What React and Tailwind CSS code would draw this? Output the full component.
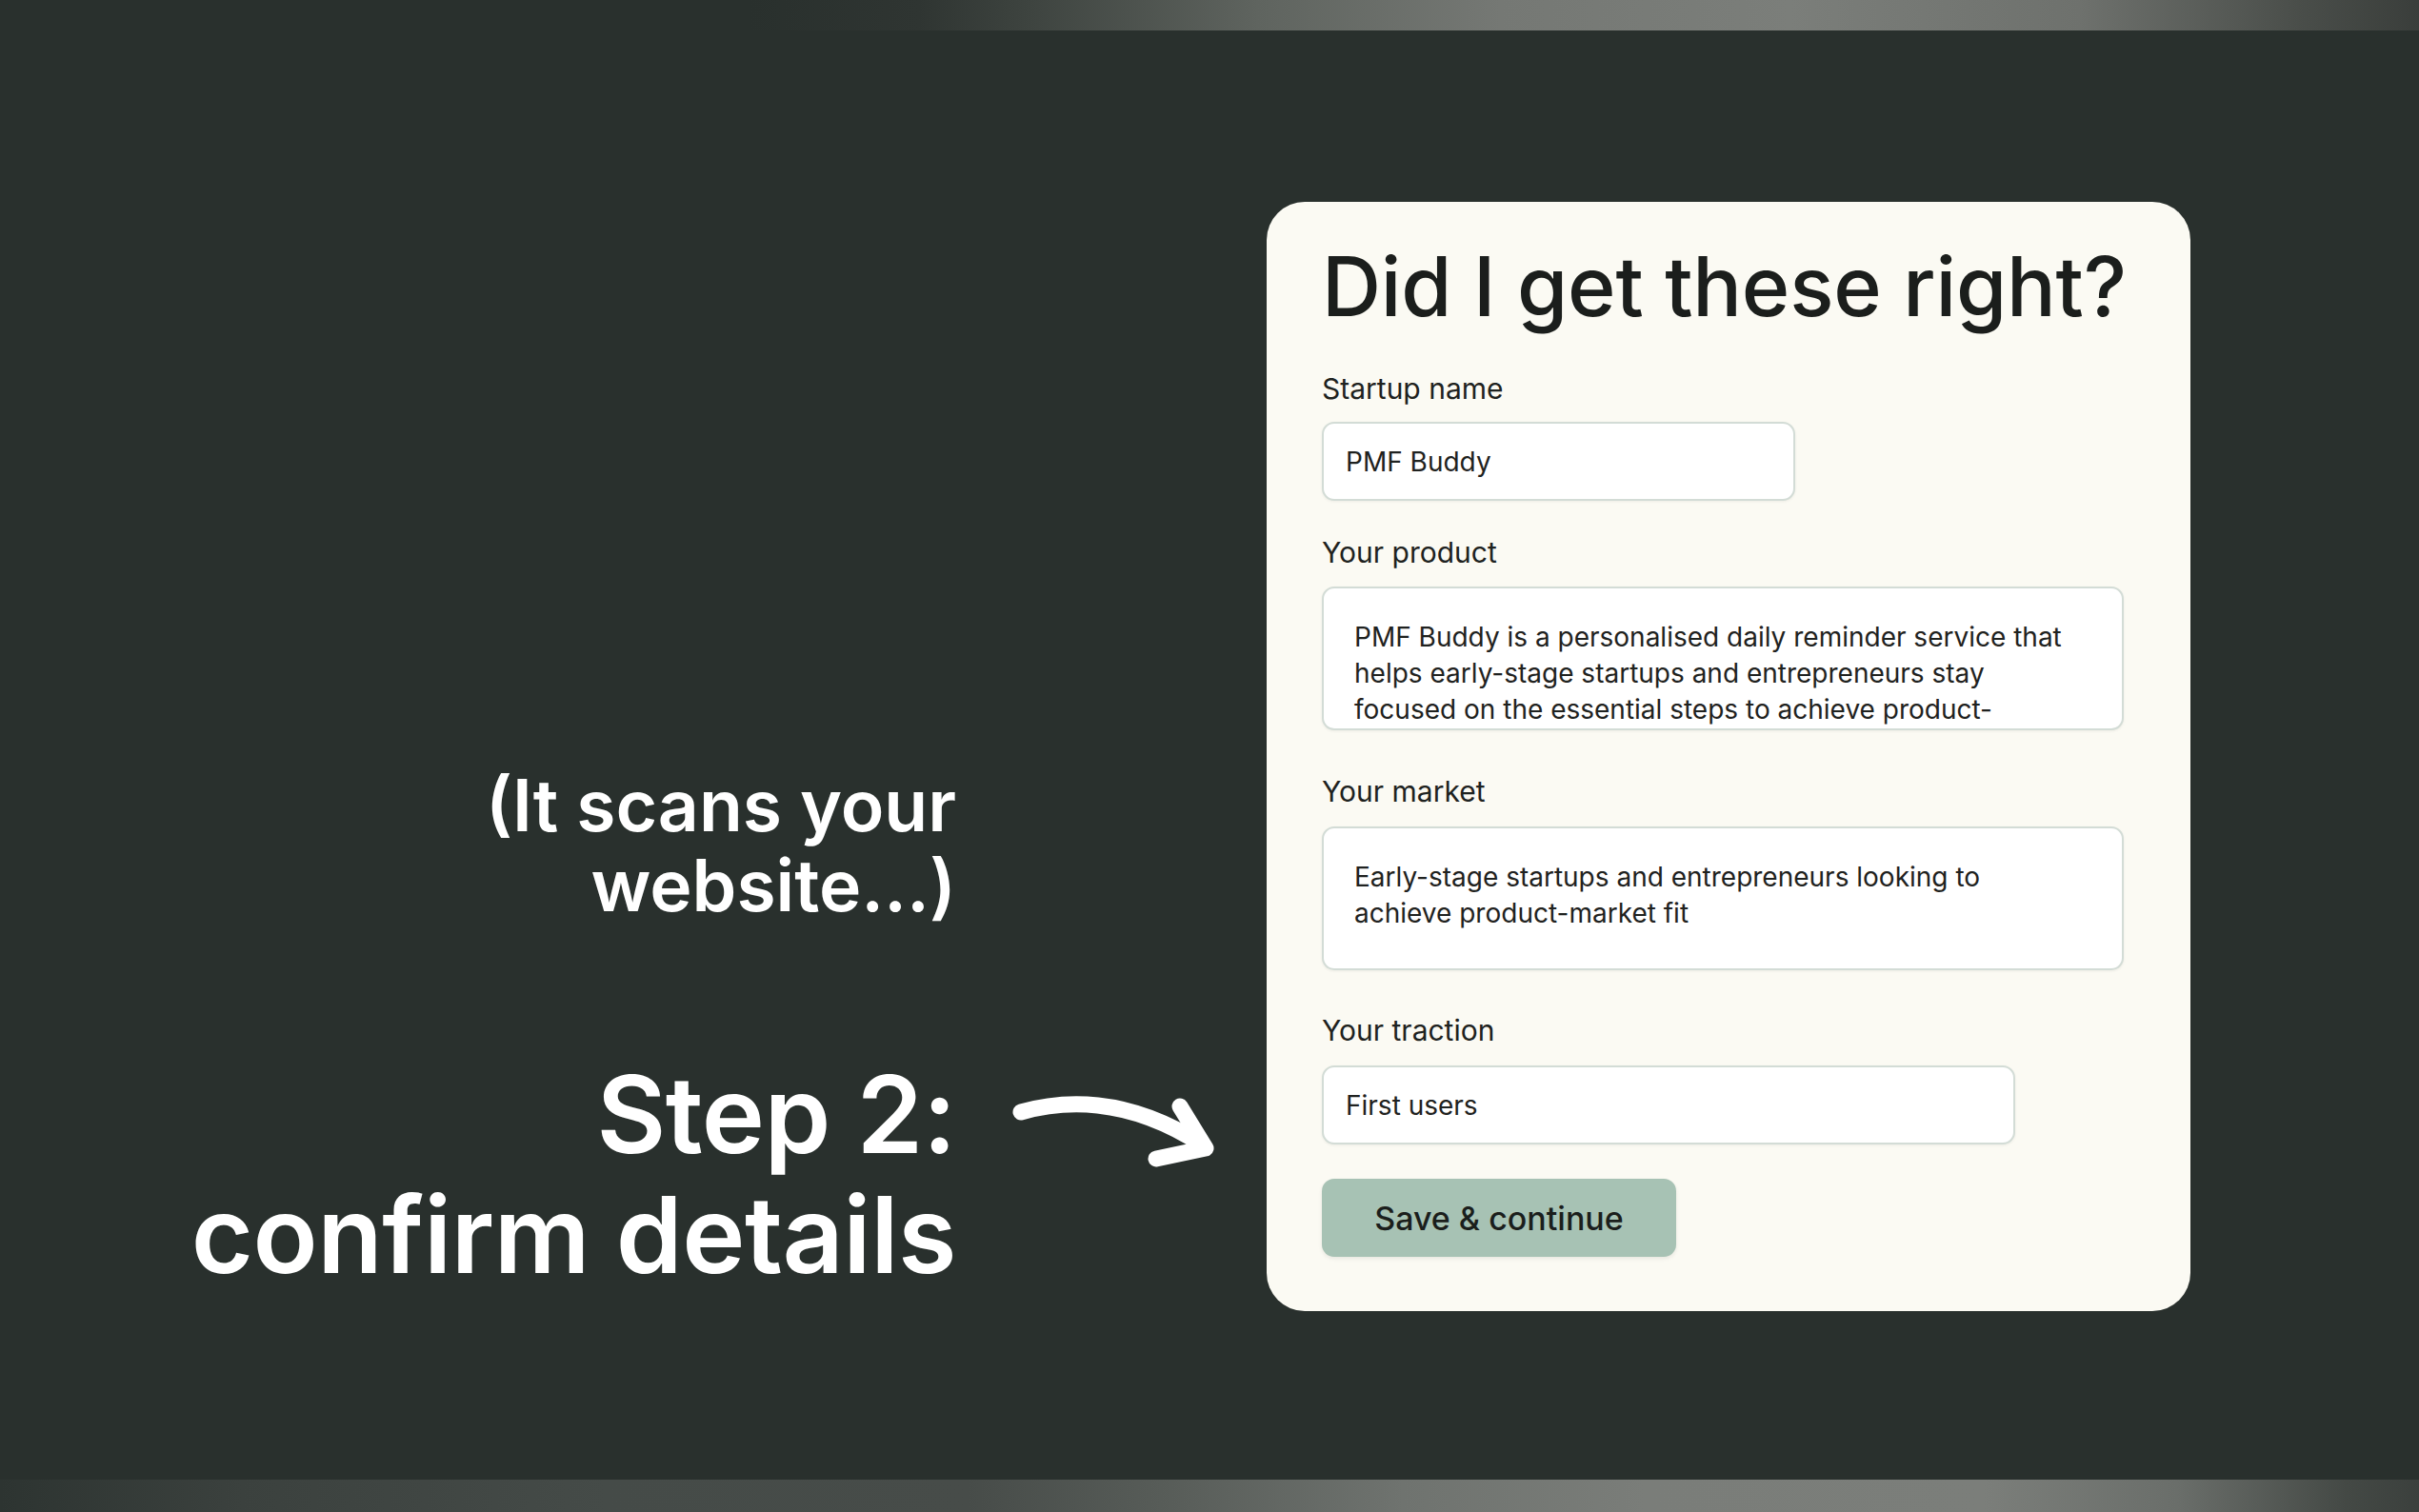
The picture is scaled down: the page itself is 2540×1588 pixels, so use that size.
import React from 'react';

const font = { fontFamily: '"Inter", "Noto Sans", sans-serif' };

function Label({ children, className = '' }) {
  return (
    <div className={`text-[30px] leading-[36px] font-normal text-[#1e2220] ${className}`}>{children}</div>
  );
}

function Field({ value, className = '' }) {
  return (
    <div className={`flex items-center h-[83px] rounded-[13px] border-2 border-[#d3dcd6] bg-white pl-[23px] text-[28px] text-[#1f2220] shadow-[0_1px_3px_rgba(0,0,0,0.06)] ${className}`}>
      {value}
    </div>
  );
}

function Area({ lines }) {
  return (
    <div className="h-[151px] w-[842px] overflow-hidden rounded-[13px] border-2 border-[#d3dcd6] bg-white pl-[32px] pt-[32px] text-[28px] leading-[38px] text-[#1f2220] shadow-[0_1px_3px_rgba(0,0,0,0.06)]">
      {lines.map((l, i) => (
        <div key={i} className="whitespace-nowrap">{l}</div>
      ))}
    </div>
  );
}

function Arrow() {
  return (
    <svg width="240" height="120" viewBox="0 0 240 120" fill="none" className="mt-[1088px] ml-[46px] shrink-0">
      <path d="M22 48 C 64 36, 132 30, 212 82" stroke="white" strokeWidth="17" strokeLinecap="round" />
      <path d="M189 42 L 216 86 L 164 97" stroke="white" strokeWidth="17" strokeLinecap="round" strokeLinejoin="round" />
    </svg>
  );
}

export default function App() {
  return (
    <div style={font} className="w-[2540px] h-[1588px] bg-[#29302d] flex flex-col overflow-hidden">
      <div className="h-[32px] shrink-0 bg-[linear-gradient(to_right,#29302d_0%,#29302d_31%,#2f3532_38%,#3c423e_42%,#5f645f_52%,#757874_62%,#7b7e7a_74%,#6e716d_86%,#4a4e4a_95%,#3a3e3b_100%)]" />

      <div className="flex-1 flex items-start">
        {/* left captions */}
        <div className="w-[1004px] shrink-0 pt-[772px] flex flex-col items-end text-right text-white font-semibold">
          <div className="text-[75px] leading-[84px]">
            <div>(It scans your</div>
            <div>website…)</div>
          </div>
          <div className="mt-[135px] text-[112px] leading-[126px] tracking-[-0.5px]">
            <div>Step 2:</div>
            <div>confirm details</div>
          </div>
        </div>

        <Arrow />

        {/* form card */}
        <div className="ml-[40px] mt-[180px] w-[970px] h-[1165px] shrink-0 rounded-[40px] bg-[#fbfaf3] pl-[58px] pt-[39px]">
          <h1 className="text-[86px] leading-[100px] font-medium text-[#1b1e1c] tracking-[-0.2px]">Did I get these right?</h1>

          <Label className="mt-[39px]">Startup name</Label>
          <Field value="PMF Buddy" className="mt-[17px] w-[497px]" />

          <Label className="mt-[36px]">Your product</Label>
          <div className="mt-[18px]">
            <Area lines={[
              'PMF Buddy is a personalised daily reminder service that',
              'helps early-stage startups and entrepreneurs stay',
              'focused on the essential steps to achieve product-',
            ]} />
          </div>

          <Label className="mt-[46px]">Your market</Label>
          <div className="mt-[19px]">
            <Area lines={[
              'Early-stage startups and entrepreneurs looking to',
              'achieve product-market fit',
            ]} />
          </div>

          <Label className="mt-[45px]">Your traction</Label>
          <Field value="First users" className="mt-[19px] w-[728px] h-[82px]" />

          <button className="mt-[36px] w-[372px] h-[82px] rounded-[13px] bg-[#a7c2b4] text-[34px] font-medium text-[#1b1e1c] shadow-[0_2px_4px_rgba(0,0,0,0.08)]">
            Save &amp; continue
          </button>
        </div>
      </div>

      <div className="h-[34px] shrink-0 bg-[linear-gradient(to_right,#2d3431_0%,#3b413e_10%,#454b48_25%,#474c49_40%,#575c58_48%,#6f736f_58%,#7a7d79_68%,#7b7e7a_82%,#6a6e6a_90%,#444945_97%,#3b403d_100%)]" />
    </div>
  );
}
